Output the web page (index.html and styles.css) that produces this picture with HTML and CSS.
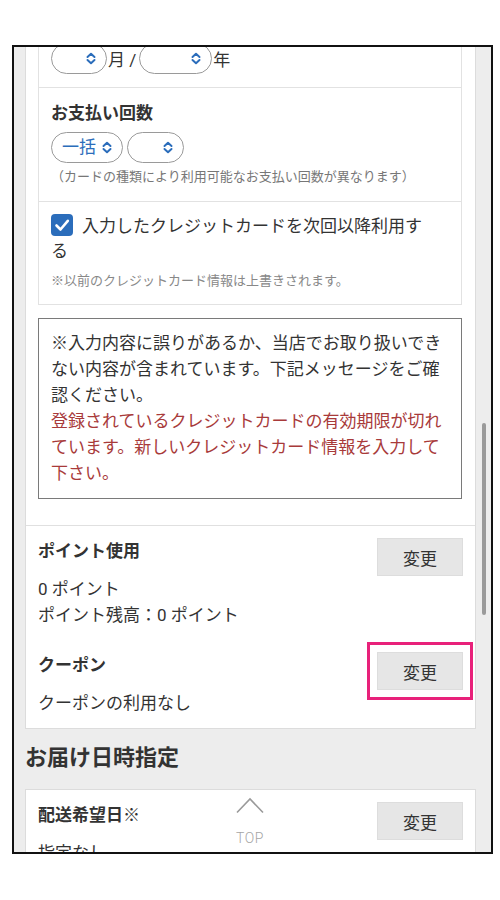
FILE: index.html
```html
<!DOCTYPE html>
<html lang="ja">
<head>
    <meta charset="UTF-8">
    <meta name="viewport" content="width=device-width, initial-scale=1.0">
    <title>ご注文手続き</title>
    <link rel="stylesheet" href="styles.css">
</head>
<body>
    <div class="screen">
        <div class="page">
            <div class="card">
                <div class="card-section">
                    <div class="form-box">
                        <!-- 有効期限 -->
                        <div class="form-row expiry-row">
                            <span class="select select-month">
                                <span class="select-value"></span>
                                <svg class="chevrons" width="10" height="13" viewBox="0 0 10 13"><path d="M1.5 5 L5 1.8 L8.5 5 M1.5 8 L5 11.2 L8.5 8" fill="none" stroke="#2b6dbb" stroke-width="2" stroke-linecap="round" stroke-linejoin="round"/></svg>
                            </span>
                            <span class="unit">月 /</span>
                            <span class="select select-year">
                                <span class="select-value"></span>
                                <svg class="chevrons" width="10" height="13" viewBox="0 0 10 13"><path d="M1.5 5 L5 1.8 L8.5 5 M1.5 8 L5 11.2 L8.5 8" fill="none" stroke="#2b6dbb" stroke-width="2" stroke-linecap="round" stroke-linejoin="round"/></svg>
                            </span>
                            <span class="unit">年</span>
                        </div>

                        <!-- お支払い回数 -->
                        <div class="form-row">
                            <div class="row-label">お支払い回数</div>
                            <div class="select-group">
                                <span class="select select-pay">
                                    <span class="select-value">一括</span>
                                    <svg class="chevrons" width="10" height="13" viewBox="0 0 10 13"><path d="M1.5 5 L5 1.8 L8.5 5 M1.5 8 L5 11.2 L8.5 8" fill="none" stroke="#2b6dbb" stroke-width="2" stroke-linecap="round" stroke-linejoin="round"/></svg>
                                </span>
                                <span class="select select-times">
                                    <span class="select-value"></span>
                                    <svg class="chevrons" width="10" height="13" viewBox="0 0 10 13"><path d="M1.5 5 L5 1.8 L8.5 5 M1.5 8 L5 11.2 L8.5 8" fill="none" stroke="#2b6dbb" stroke-width="2" stroke-linecap="round" stroke-linejoin="round"/></svg>
                                </span>
                            </div>
                            <div class="row-note">（カードの種類により利用可能なお支払い回数が異なります）</div>
                        </div>

                        <!-- 次回以降利用 -->
                        <div class="form-row check-row">
                            <label class="check-label"><svg class="checkbox" width="22" height="22" viewBox="0 0 22 22"><rect width="22" height="22" rx="4" fill="#2b6dbb"/><path d="M5.5 11.5 L9.5 15.5 L16.8 6.8" fill="none" stroke="#fff" stroke-width="2.6" stroke-linecap="round" stroke-linejoin="round"/></svg>入力したクレジットカードを次回以降利用する</label>
                            <div class="row-note small">※以前のクレジットカード情報は上書きされます。</div>
                        </div>
                    </div>

                    <div class="error-box">
                        <p>※入力内容に誤りがあるか、当店でお取り扱いできない内容が含まれています。下記メッセージをご確認ください。</p>
                        <p class="error-text">登録されているクレジットカードの有効期限が切れています。新しいクレジットカード情報を入力して下さい。</p>
                    </div>
                </div>

                <div class="card-section option-section">
                    <div class="option">
                        <div class="option-head">
                            <div class="option-title">ポイント使用</div>
                            <button class="change-btn">変更</button>
                        </div>
                        <div class="option-value">0 ポイント</div>
                        <div class="option-value">ポイント残高：0 ポイント</div>
                    </div>
                    <div class="option">
                        <div class="option-head">
                            <div class="option-title">クーポン</div>
                            <button class="change-btn highlighted">変更</button>
                        </div>
                        <div class="option-value">クーポンの利用なし</div>
                    </div>
                </div>
            </div>

            <h2 class="section-title">お届け日時指定</h2>

            <div class="card">
                <div class="card-section option-section">
                    <div class="option">
                        <div class="option-head">
                            <div class="option-title">配送希望日※</div>
                            <button class="change-btn">変更</button>
                        </div>
                        <div class="option-value">指定なし</div>
                    </div>
                </div>
            </div>
        </div>

        <!-- スクロールバー -->
        <div class="scroll-thumb"></div>

        <!-- ページトップ -->
        <div class="to-top">
            <svg width="30" height="18" viewBox="0 0 30 18"><path d="M2 16.5 L15 3 L28 16.5" fill="none" stroke="#9a9a9a" stroke-width="1.6"/></svg>
            <span>TOP</span>
        </div>
    </div>
</body>
</html>
```

FILE: styles.css
```css
body {
    margin: 0;
    background: #fff;
    font-family: Roboto, "Noto Sans CJK JP", sans-serif;
    color: #333;
}

.screen {
    position: relative;
    margin: 45px 0 0 12px;
    width: 477px;
    height: 805px;
    border: 2px solid #111;
    background: #ededed;
    overflow: hidden;
}

.page {
    margin-top: -4px;
    padding: 0 15px 0 11px;
}

.card {
    background: #fff;
    border: 1px solid #dcdcdc;
}

.card:first-child {
    border-top: none;
}

.card-section {
    padding: 0 13px 26px 12px;
}

.form-box {
    border: 1px solid #e2e2e2;
    border-top: none;
}

.form-row {
    padding: 13px 12px 14px;
    border-top: 1px solid #e2e2e2;
}

.expiry-row {
    display: flex;
    align-items: center;
    padding-top: 0;
    padding-bottom: 13px;
    border-top: none;
}

.unit {
    font-size: 17px;
    margin: 0 3px 0 1px;
}

.select {
    display: inline-flex;
    align-items: center;
    justify-content: space-between;
    box-sizing: border-box;
    height: 31px;
    padding: 0 10px;
    border: 1px solid #9a9a9a;
    border-radius: 16px;
    background: #fff;
    color: #2b6dbb;
    font-size: 17px;
}

.select-month {
    width: 56px;
}

.select-year {
    width: 73px;
}

.select-pay {
    width: 72px;
}

.select-times {
    width: 57px;
}

.chevrons {
    flex: none;
    margin-left: auto;
}

.select-value {
    line-height: 1;
}

.select-group {
    display: flex;
    gap: 4px;
    margin-top: 7px;
}

.row-label {
    font-size: 17px;
    font-weight: bold;
    line-height: 24px;
}

.row-note {
    margin-top: 4px;
    font-size: 13px;
    line-height: 20px;
    color: #777;
}

.row-note.small {
    margin-top: 8px;
    line-height: 18px;
    color: #888;
}

.check-row {
    padding: 12px 28px 14px 12px;
}

.check-label {
    display: block;
    font-size: 17px;
    line-height: 25px;
}

.checkbox {
    vertical-align: -4px;
    margin-right: 9px;
}

.error-box {
    margin-top: 13px;
    padding: 11px 12px 12px;
    border: 1px solid #7a7a7a;
    font-size: 17px;
    line-height: 26px;
}

.error-box p {
    margin: 0;
}

.error-text {
    color: #a83a3a;
}

.option-section {
    padding: 12px 12px 12px 12px;
    border-top: 1px solid #e0e0e0;
}

.card > .option-section:first-child {
    border-top: none;
}

.option + .option {
    margin-top: 24px;
}

.option-head {
    display: flex;
    justify-content: space-between;
    align-items: flex-start;
}

.option-title {
    font-size: 17px;
    font-weight: bold;
    line-height: 26px;
}

.option-value {
    font-size: 17px;
    line-height: 26px;
}

.change-btn {
    width: 86px;
    height: 38px;
    border: 1px solid #dddddd;
    border-radius: 0;
    background: #e6e6e6;
    color: #333;
    font-family: Roboto, "Noto Sans CJK JP", sans-serif;
    font-size: 17px;
    padding: 0;
}

.change-btn.highlighted {
    outline: 3px solid #e8217a;
    outline-offset: 7px;
}

.section-title {
    margin: 13px 0 15px;
    font-size: 22px;
    line-height: 32px;
    font-weight: bold;
}

.scroll-thumb {
    position: absolute;
    left: 468px;
    top: 376px;
    width: 4px;
    height: 192px;
    border-radius: 2px;
    background: #9a9a9a;
}

.to-top {
    position: absolute;
    left: 207px;
    top: 749px;
    width: 58px;
    display: flex;
    flex-direction: column;
    align-items: center;
    color: #a5a5a5;
    font-size: 14px;
    font-weight: 300;
    letter-spacing: 0.5px;
}

.to-top span {
    margin-top: 16px;
}
```
